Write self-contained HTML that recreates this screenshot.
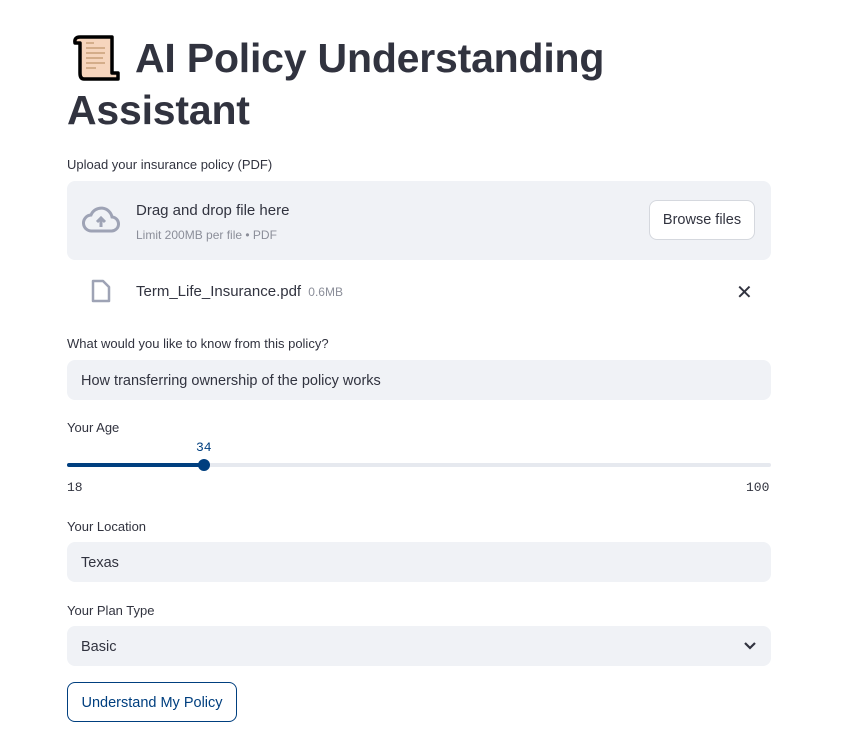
<!DOCTYPE html>
<html><head><style>
*{box-sizing:border-box;margin:0;padding:0}
body{width:845px;height:742px;background:#fff;font-family:"Liberation Sans",sans-serif;color:#31333f;position:relative;overflow:hidden}
.a{position:absolute}
.lbl{font-size:13px;color:#31333f;left:67px}
.box{left:67px;width:704px;background:#f0f2f6;border-radius:8px}
h1{position:absolute;left:67px;top:32px;font-size:41px;font-weight:bold;line-height:52px;letter-spacing:-0.2px}
.mono{font-family:"Liberation Mono",monospace;font-size:13px}
</style></head><body>
<svg class="a" style="left:70px;top:33px" width="52" height="50" viewBox="0 0 48 50"><path d="M8 4 H40 V40 H46 V46 H12 Q8 46 8 40 V10 H3 Q2 4 8 4Z" fill="#f6d5bd" stroke="#000" stroke-width="3.5" stroke-linejoin="round"/><g stroke="#c8a07a" stroke-width="1.5"><line x1="14" y1="10" x2="22" y2="10"/><line x1="14" y1="15" x2="33" y2="15"/><line x1="14" y1="20" x2="33" y2="20"/><line x1="14" y1="25" x2="31" y2="25"/><line x1="14" y1="30" x2="33" y2="30"/><line x1="14" y1="35" x2="24" y2="35"/></g></svg>
<h1><span style="display:inline-block;width:68px"></span>AI Policy Understanding<br>Assistant</h1>
<div class="a lbl" style="top:157px">Upload your insurance policy (PDF)</div>
<div class="a box" style="top:181px;height:79px"></div>
<svg class="a" style="left:82px;top:206px" width="38" height="28" viewBox="0 0 38 28"><path d="M10 25 H29 A7 7 0 0 0 30 11 A11 11 0 0 0 9 9 A8 8 0 0 0 10 25Z" fill="none" stroke="#9ea3b5" stroke-width="3"/><path d="M19 21 V13 M15 16 L19 12 L23 16" stroke="#9ea3b5" stroke-width="3" fill="none"/></svg>
<div class="a" style="left:136px;top:202px;font-size:15px">Drag and drop file here</div>
<div class="a" style="left:136px;top:228px;font-size:12px;color:#8b8e99">Limit 200MB per file • PDF</div>
<div class="a" style="left:649px;top:200px;width:106px;height:40px;border:1px solid #d5d8de;border-radius:8px;background:#fff;font-size:14.5px;text-align:center;line-height:38px">Browse files</div>
<svg class="a" style="left:91px;top:279px" width="20" height="24" viewBox="0 0 20 24"><path d="M2 2 H12 L18 8 V22 H2Z" fill="none" stroke="#9ea3b5" stroke-width="2.5" stroke-linejoin="round"/></svg>
<div class="a" style="left:136px;top:283px;font-size:15px">Term_Life_Insurance.pdf <span style="font-size:12px;color:#8b8e99;margin-left:3px">0.6MB</span></div>
<div class="a" style="left:736px;top:280px;font-size:20px">✕</div>
<div class="a lbl" style="top:336px">What would you like to know from this policy?</div>
<div class="a box" style="top:360px;height:40px;padding:0 14px;line-height:42px;font-size:14.5px">How transferring ownership of the policy works</div>
<div class="a lbl" style="top:420px">Your Age</div>
<div class="a mono" style="left:196px;top:440px;color:#003f7f">34</div>
<div class="a" style="left:67px;top:463px;width:704px;height:4px;background:#e6e9ef;border-radius:2px"></div>
<div class="a" style="left:67px;top:463px;width:138px;height:4px;background:#003f7f;border-radius:2px"></div>
<div class="a" style="left:198px;top:459px;width:12px;height:12px;background:#003f7f;border-radius:50%"></div>
<div class="a mono" style="left:67px;top:480px">18</div>
<div class="a mono" style="left:746px;top:480px">100</div>
<div class="a lbl" style="top:519px">Your Location</div>
<div class="a box" style="top:542px;height:40px;padding:0 14px;line-height:42px;font-size:14.5px">Texas</div>
<div class="a lbl" style="top:603px">Your Plan Type</div>
<div class="a box" style="top:626px;height:40px;padding:0 14px;line-height:42px;font-size:14.5px">Basic</div>
<svg class="a" style="left:743px;top:641px" width="14" height="10" viewBox="0 0 14 10"><path d="M2 2 L7 7 L12 2" stroke="#31333f" stroke-width="2.2" fill="none"/></svg>
<div class="a" style="left:67px;top:682px;width:170px;height:40px;border:1px solid #003f7f;border-radius:8px;color:#003f7f;font-size:14.5px;text-align:center;line-height:40px">Understand My Policy</div>
</body></html>
